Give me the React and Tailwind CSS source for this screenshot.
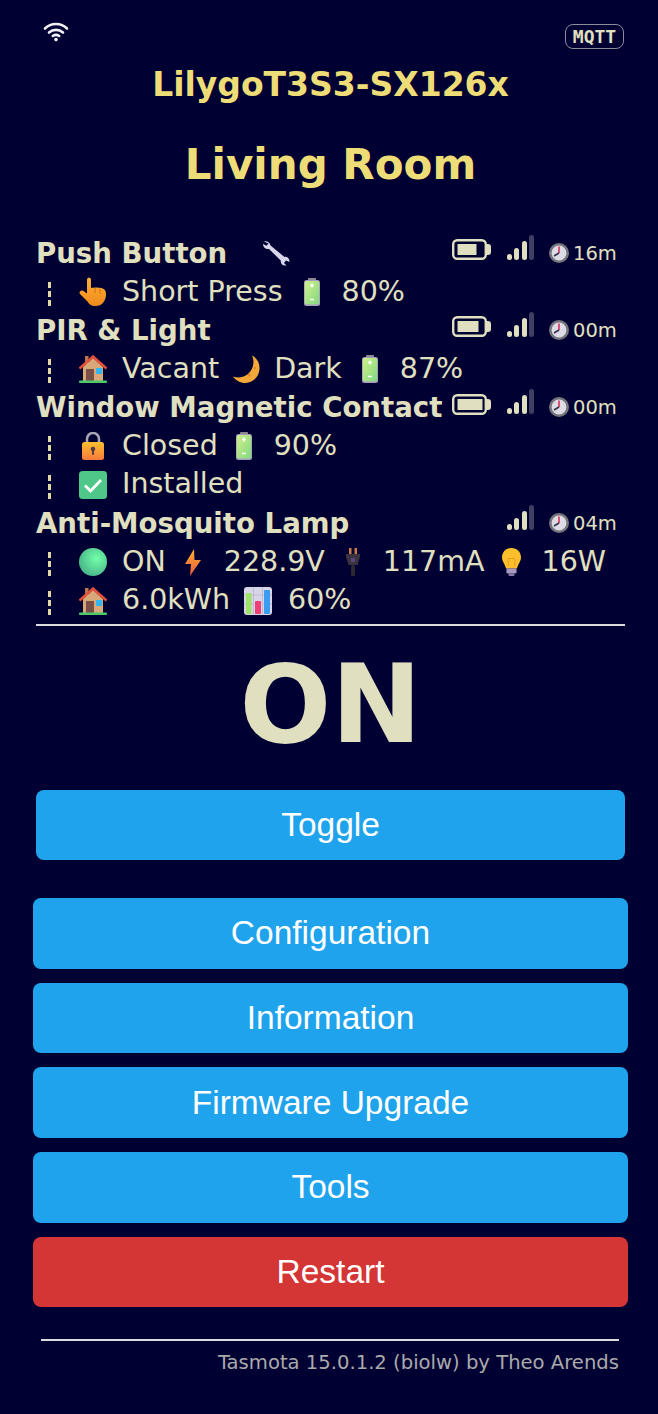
const body = "[font-family:'DejaVu_Sans',Verdana,sans-serif]";

function Wifi() {
  return (
    <svg width="26" height="21" viewBox="0 0 26 21" fill="none" stroke="#f0f0f5" strokeWidth="2.6" strokeLinecap="round">
      <path d="M2 7.500C8 1.500 18 1.500 24 7.500" />
      <path d="M6 11.500C10 8 16 8 20 11.500" />
      <path d="M9.800 15C11.800 13.500 14.200 13.500 16.200 15" />
      <circle cx="13" cy="18.600" r="1.800" fill="#f0f0f5" stroke="none" />
    </svg>
  );
}

function Battery({ level }) {
  return (
    <svg width="39" height="21" viewBox="0 0 39 21">
      <rect x="1.200" y="1.200" width="32.600" height="18.600" rx="4" fill="none" stroke="#e0e0c0" strokeWidth="2.400" />
      <rect x="5.500" y="5" width={level} height="11" fill="#e0e0c0" />
      <path d="M35 5h1a3 3 0 0 1 3 3v5a3 3 0 0 1-3 3h-1z" fill="#e0e0c0" />
    </svg>
  );
}

function Signal() {
  return (
    <svg width="27" height="25" viewBox="0 0 27 25">
      <rect x="0" y="19" width="5" height="6" rx="2.500" fill="#e0e0c0" />
      <rect x="7" y="13" width="5" height="12" rx="2.500" fill="#e0e0c0" />
      <rect x="15" y="6" width="5" height="19" rx="2.500" fill="#e0e0c0" />
      <rect x="22" y="0" width="5" height="25" rx="2.500" fill="#3f3f62" />
    </svg>
  );
}

function Clock() {
  return (
    <svg width="20" height="20" viewBox="0 0 20 20">
      <circle cx="10" cy="10" r="8.700" fill="#dcdbe6" stroke="#77757c" strokeWidth="2.600" />
      <path d="M10 10V3.500" stroke="#d8325a" strokeWidth="1.600" />
      <path d="M10 10L5 13" stroke="#37334a" strokeWidth="1.800" />
    </svg>
  );
}

function Wrench() {
  return (
    <svg width="28" height="26" viewBox="0 0 28 26">
      <path d="M2 1.500c3-1 6 1 6.500 4l14 11.500c3-.8 5 1.500 5 5l-3.500-1.500-2 2.500 2.500 2.500c-3.500.5-6-1.500-5.800-5L7 9C4 9.500 1 7.500 1 4l3.500 1.800L6.500 3.500z" fill="#d9d6ec" />
    </svg>
  );
}

function Hand() {
  return (
    <svg width="28" height="30" viewBox="0 0 28 30">
      <defs>
        <linearGradient id="hand" x1="0" y1="0" x2="0" y2="1">
          <stop offset="0" stopColor="#fdb033" />
          <stop offset="1" stopColor="#f08a1c" />
        </linearGradient>
      </defs>
      <path d="M8 2.500c0-2.500 4-2.500 4 0V11c4-1 12-1 14 2 1.500 2.500 1.500 8-1 11.500-2 3-4.500 4.500-9 4.500-4 0-6-2-8-5L1 17c-1.500-2 1-4.500 3.500-3L8 16.500z" fill="url(#hand)" />
      <path d="M16 11v5M21 11.500v5" stroke="#d8741a" strokeWidth="1.200" />
    </svg>
  );
}

function BatteryEmoji() {
  return (
    <svg width="16" height="28" viewBox="0 0 16 28">
      <defs>
        <linearGradient id="batt" x1="0" y1="0" x2="1" y2="1">
          <stop offset="0" stopColor="#cff08a" />
          <stop offset="1" stopColor="#82d880" />
        </linearGradient>
      </defs>
      <rect x="4" y="0" width="8" height="3" rx="1" fill="#8c8a90" />
      <rect x="0" y="2" width="16" height="26" rx="2.500" fill="#a99ac2" />
      <rect x="0.800" y="3" width="14.400" height="23.500" rx="2" fill="url(#batt)" />
      <path d="M6 7.500h4M8 5.500v4M6 21.500h4" stroke="#fff" strokeWidth="1.500" />
    </svg>
  );
}

function House() {
  return (
    <svg width="28" height="28" viewBox="0 0 28 28">
      <rect x="6" y="1" width="3.500" height="8" fill="#b5784f" />
      <path d="M4 12L14 3l10 9v14H4z" fill="#d9a878" />
      <path d="M0.500 13.500L14 1.500l13.500 12" fill="none" stroke="#e9503a" strokeWidth="2.400" />
      <rect x="7" y="14" width="8" height="12" fill="#7a5046" />
      <rect x="17" y="13" width="6" height="6" fill="#35b5ee" />
      <rect x="0" y="25.500" width="28" height="2.500" rx="1" fill="#4cca6a" />
    </svg>
  );
}

function Moon() {
  return (
    <svg width="27" height="28" viewBox="0 0 27 28">
      <path d="M19 0.500C24 3 27 8 26.500 14c-.5 8-7 14-14 14C7 28 3 25.500 0 21.500c8 2.500 15-.5 18.500-7C21 10 21 4.500 19 .5z" fill="#f5a83a" />
      <circle cx="16" cy="20" r="1.500" fill="#e08a28" />
      <circle cx="22" cy="13" r="1.300" fill="#e08a28" />
    </svg>
  );
}

function Lock() {
  return (
    <svg width="22" height="28" viewBox="0 0 22 28">
      <defs>
        <linearGradient id="lock" x1="0" y1="0" x2="0" y2="1">
          <stop offset="0" stopColor="#fdc02f" />
          <stop offset="1" stopColor="#f5793a" />
        </linearGradient>
      </defs>
      <path d="M5 11V7a6 6 0 0 1 12 0v4" fill="none" stroke="#a9a4b4" strokeWidth="2.600" />
      <rect x="0" y="10" width="22" height="18" rx="2.500" fill="url(#lock)" />
      <circle cx="11" cy="17" r="2.300" fill="#5b3a4a" />
      <rect x="10" y="17" width="2" height="6" rx="1" fill="#5b3a4a" />
    </svg>
  );
}

function Check() {
  return (
    <svg width="28" height="28" viewBox="0 0 28 28">
      <rect x="0" y="0" width="28" height="28" rx="3.500" fill="#4fc788" />
      <path d="M6 14.500l5.500 5.500L22 9" fill="none" stroke="#fff" strokeWidth="2.800" />
    </svg>
  );
}

function Ball() {
  return (
    <svg width="28" height="28" viewBox="0 0 28 28">
      <defs>
        <radialGradient id="ball" cx="0.620" cy="0.380" r="0.700">
          <stop offset="0" stopColor="#72ffa8" />
          <stop offset="1" stopColor="#46b088" />
        </radialGradient>
      </defs>
      <circle cx="14" cy="14" r="14" fill="url(#ball)" />
    </svg>
  );
}

function Bolt() {
  return (
    <svg width="16" height="27" viewBox="0 0 16 27">
      <defs>
        <linearGradient id="bolt" x1="0" y1="0" x2="0" y2="1">
          <stop offset="0" stopColor="#fdb02f" />
          <stop offset="1" stopColor="#e8583f" />
        </linearGradient>
      </defs>
      <path d="M9 0L0 15h6l-1 12 11-16H9.500z" fill="url(#bolt)" />
    </svg>
  );
}

function Plug() {
  return (
    <svg width="14" height="28" viewBox="0 0 14 28">
      <rect x="3" y="0" width="2.500" height="6" fill="#c9794a" />
      <rect x="8.500" y="0" width="2.500" height="6" fill="#c9794a" />
      <path d="M0 6h14v3l-2.500 8h-9L0 9z" fill="#3a3240" />
      <path d="M5 11h4M5 13h4" stroke="#7a58c8" strokeWidth="1" />
      <rect x="5" y="17" width="4" height="11" rx="1.500" fill="#2e2833" />
    </svg>
  );
}

function Bulb() {
  return (
    <svg width="19" height="28" viewBox="0 0 19 28">
      <path d="M9.500 0C15 0 19 4 19 9.500c0 4-3 6.500-4 11H4c-1-4.500-4-7-4-11C0 4 4 0 9.500 0z" fill="#fbbf2e" />
      <path d="M6.500 18c0-4-1-6 0-7.500h6c1 1.500 0 3.500 0 7.500" fill="none" stroke="#ea9a1e" strokeWidth="1" />
      <rect x="4.500" y="20.500" width="10" height="5" rx="1" fill="#a99ac2" />
      <rect x="6.500" y="25.500" width="6" height="2.500" rx="1" fill="#8a7ba4" />
    </svg>
  );
}

function Chart() {
  return (
    <svg width="28" height="28" viewBox="0 0 28 28">
      <rect x="0" y="0" width="28" height="28" rx="3" fill="#d8d6e6" />
      <path d="M0 8h28M0 17h28M9.500 0v28M18.500 0v28" stroke="#bdbbd0" strokeWidth="1" />
      <rect x="2" y="6" width="5.500" height="21" rx="1" fill="#9fe06a" />
      <rect x="11" y="14" width="6" height="13" rx="1" fill="#ee3f78" />
      <rect x="20" y="3" width="6" height="24" rx="1" fill="#3a9df0" />
    </svg>
  );
}

function Dash() {
  return (
    <span className="w-[43px] shrink-0 flex flex-col gap-[3px] pl-[12px] mt-[4px]">
      <span className="w-[3px] h-[6px] bg-[#e0d8a8]" />
      <span className="w-[3px] h-[6px] bg-[#e0d8a8]" />
      <span className="w-[3px] h-[6px] bg-[#e0d8a8]" />
    </span>
  );
}

function Value({ children }) {
  return (
    <div className="flex items-center h-[38.600px] text-[28.500px] whitespace-nowrap">
      <Dash />
      {children}
    </div>
  );
}

function SensorName({ name, battery, time, wrench }) {
  return (
    <div className="flex items-center h-[38.600px] whitespace-nowrap">
      <div className="flex-1 flex items-center font-bold text-[27.600px] min-w-0">
        {name}
        {wrench && (
          <span className="ml-[35px]">
            <Wrench />
          </span>
        )}
      </div>
      <div className="w-[39px] mr-[16px] flex mb-[7px]">{battery !== undefined && <Battery level={battery} />}</div>
      <div className="flex mb-[12px]">
        <Signal />
      </div>
      <div className="ml-[15px] flex mb-[1px]">
        <Clock />
      </div>
      <span className="w-[56px] pl-[4px] text-[19.500px]">{time}</span>
    </div>
  );
}

function Button({ children, color = "bg-[#1fa3ec]" }) {
  return (
    <button className={`w-full h-[70.700px] rounded-[8px] text-white text-[33.500px] ${color}`}>{children}</button>
  );
}

export default function App() {
  return (
    <div className={`min-h-[1414px] bg-[#000033] text-[#e0e0c0] pl-[33px] pr-[30px] ${body}`}>
      <div className="flex justify-between items-start h-[50px] pt-[21px] pl-[10px] pr-[4px]">
        <Wifi />
        <span className="mt-[3px] h-[25px] w-[59px] flex items-center justify-center rounded-[8px] border border-[#8c8c9c] text-[18px] font-bold [font-family:'DejaVu_Sans_Mono',monospace]">
          MQTT
        </span>
      </div>
      <h3 className="text-center text-[#eedd77] font-bold text-[33px] leading-[36px] mt-[17px]">LilygoT3S3-SX126x</h3>
      <h2 className="text-center text-[#eedd77] font-bold text-[42px] leading-[52px] mt-[36px]">Living Room</h2>

      <div className="px-[3px] mt-[43px]">
        <SensorName name="Push Button" battery={19} time="16m" wrench />
        <Value>
          <Hand />
          <span className="ml-[15px]">Short Press</span>
          <span className="ml-[21px]"><BatteryEmoji /></span>
          <span className="ml-[22px]">80%</span>
        </Value>
        <SensorName name="PIR & Light" battery={21} time="00m" />
        <Value>
          <House />
          <span className="ml-[15px]">Vacant</span>
          <span className="ml-[14px]"><Moon /></span>
          <span className="ml-[14px]">Dark</span>
          <span className="ml-[20px]"><BatteryEmoji /></span>
          <span className="ml-[22px]">87%</span>
        </Value>
        <SensorName name="Window Magnetic Contact" battery={25} time="00m" />
        <Value>
          <span className="ml-[3px]"><Lock /></span>
          <span className="ml-[18px]">Closed</span>
          <span className="ml-[18px]"><BatteryEmoji /></span>
          <span className="ml-[22px]">90%</span>
        </Value>
        <Value>
          <Check />
          <span className="ml-[15px]">Installed</span>
        </Value>
        <SensorName name="Anti-Mosquito Lamp" time="04m" />
        <Value>
          <Ball />
          <span className="ml-[15px]">ON</span>
          <span className="ml-[19px]"><Bolt /></span>
          <span className="ml-[23px]">228.9V</span>
          <span className="ml-[21px]"><Plug /></span>
          <span className="ml-[23px]">117mA</span>
          <span className="ml-[17px]"><Bulb /></span>
          <span className="ml-[21px]">16W</span>
        </Value>
        <Value>
          <House />
          <span className="ml-[15px]">6.0kWh</span>
          <span className="ml-[14px]"><Chart /></span>
          <span className="ml-[16px]">60%</span>
        </Value>
        <div className="h-[2px] bg-[#dcdce0] mt-[4px]" />
        <div className="text-center font-bold text-[108px] leading-[130px] mt-[14px]">ON</div>
        <div className="mt-[20px] [font-family:'Liberation_Sans',Arial,sans-serif]">
          <button className="w-full h-[70px] rounded-[8px] bg-[#1fa3ec] text-white text-[33.500px]">Toggle</button>
        </div>
      </div>

      <div className="mt-[38px] flex flex-col gap-[14px] [font-family:'Liberation_Sans',Arial,sans-serif]">
        <Button>Configuration</Button>
        <Button>Information</Button>
        <Button>Firmware Upgrade</Button>
        <Button>Tools</Button>
        <Button color="bg-[#d43535]">Restart</Button>
      </div>

      <div className="ml-[8px] mr-[9px] mt-[32px] border-t-2 border-[#dcdce0] pt-[7px] text-right text-[19.600px] text-[#aaaaaa]">
        Tasmota 15.0.1.2 (biolw) by Theo Arends
      </div>
    </div>
  );
}
